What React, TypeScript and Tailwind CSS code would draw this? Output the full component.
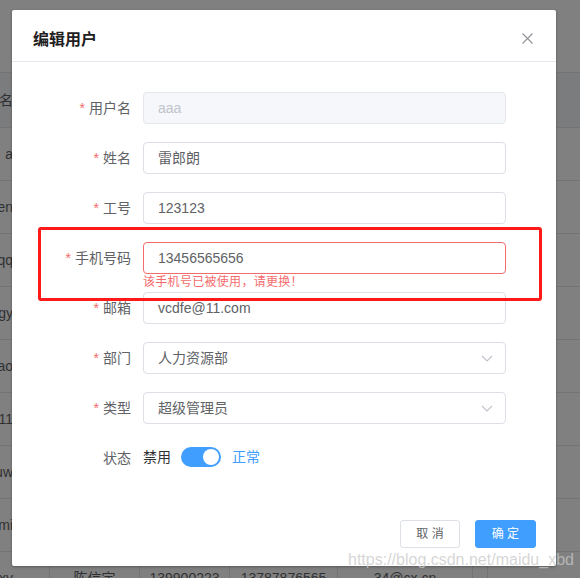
import React from 'react';

const FONT = "font-['Liberation_Sans','Noto_Sans_CJK_SC',sans-serif]";

// background table rows (seen through the modal mask)
const ROWS = [
  { first: '用户名', header: true },
  { first: 'a' },
  { first: 'zhangsen' },
  { first: 'qq' },
  { first: 'wangy' },
  { first: 'xiao' },
  { first: '11' },
  { first: 'liuw' },
  { first: 'admi' },
  { first: 'cxy', rest: ['陈信宇', '139900223', '13787876565', '34@cx.cn'] }
];

function BgTable() {
  return (
    <div className="pt-[72px]">
      {ROWS.map((r, i) => (
        <div
          key={i}
          className={`flex border-t border-[#737476] ${r.header ? 'h-[55px] bg-[#7b7c7d]' : 'h-[53px]'}`}
        >
          <div className="w-[50px] shrink-0 flex items-center justify-end pr-[36px] border-r border-[#737476] whitespace-nowrap text-[14px] text-[#303133]">
            <span>{r.first}</span>
          </div>
          <div className="w-[90px] shrink-0 flex items-center justify-center border-r border-[#737476] text-[14px] text-[#303133]">
            {r.rest?.[0]}
          </div>
          <div className="w-[90px] shrink-0 flex items-center justify-center border-r border-[#737476] text-[14px] text-[#303133]">
            {r.rest?.[1]}
          </div>
          <div className="w-[108px] shrink-0 flex items-center justify-center border-r border-[#737476] text-[14px] text-[#303133]">
            {r.rest?.[2]}
          </div>
          <div className="w-[135px] shrink-0 flex items-center justify-center border-r border-[#737476] text-[14px] text-[#303133]">
            {r.rest?.[3]}
          </div>
          <div className="w-[15px] shrink-0 border-r border-[#737476]" />
        </div>
      ))}
    </div>
  );
}

function Chevron() {
  return (
    <svg width="12" height="7" viewBox="0 0 12 7" fill="none">
      <polyline points="1,1 6,6 11,1" stroke="#c0c4cc" strokeWidth="1.1" />
    </svg>
  );
}

function Label({ text, required = true }: { text: string; required?: boolean }) {
  return (
    <div className="w-[111px] shrink-0 pr-[12px] h-[32px] flex items-center justify-end text-[14px] text-[#606266]">
      {required && <span className="text-[#f56c6c] mr-[4px]">*</span>}
      {text}
    </div>
  );
}

function Field({
  label,
  value,
  disabled = false,
  select = false,
  error
}: {
  label: string;
  value: string;
  disabled?: boolean;
  select?: boolean;
  error?: string;
}) {
  const border = error ? 'border-[#f56c6c]' : disabled ? 'border-[#e4e7ed]' : 'border-[#dcdfe6]';
  return (
    <div className={`flex ${error ? '' : 'mb-[18px]'}`}>
      <Label text={label} />
      <div className="w-[363px]">
        <div
          className={`h-[32px] rounded-[4px] border ${border} ${disabled ? 'bg-[#f5f7fa] text-[#c0c4cc]' : 'bg-white text-[#606266]'} flex items-center pl-[14px] pr-[12px] text-[14px]`}
        >
          <span className="flex-1">{value}</span>
          {select && <Chevron />}
        </div>
        {error && (
          <div className="h-[18px] pt-[2px] text-[12px] leading-[12px] tracking-[0.3px] text-[#f56c6c]">{error}</div>
        )}
      </div>
    </div>
  );
}

export default function App() {
  return (
    <div className={`relative w-[580px] h-[578px] overflow-hidden bg-[#808080] ${FONT}`}>
      <BgTable />

      {/* Dialog */}
      <div className="absolute left-[12px] top-[10px] w-[544px] h-[556px] bg-white rounded-[2px] shadow-[0_1px_3px_rgba(0,0,0,0.3)] flex flex-col">
        <div className="relative pt-[18px] pb-[9px] px-[21px] border-b border-[#e4e7ed]">
          <div className="text-[16px] leading-[24px] font-semibold text-[#1f2021]">编辑用户</div>
          <svg className="absolute right-[23px] top-[23px]" width="11" height="11" viewBox="0 0 11 11">
            <path d="M0.5 0.5L10.5 10.5M10.5 0.5L0.5 10.5" stroke="#909399" strokeWidth="1.1" />
          </svg>
        </div>

        <div className="pt-[30px] pl-[20px]">
          <Field label="用户名" value="aaa" disabled />
          <Field label="姓名" value="雷郎朗" />
          <Field label="工号" value="123123" />
          <Field label="手机号码" value="13456565656" error="该手机号已被使用，请更换！" />
          <Field label="邮箱" value="vcdfe@11.com" />
          <Field label="部门" value="人力资源部" select />
          <Field label="类型" value="超级管理员" select />
          <div className="flex">
            <Label text="状态" required={false} />
            <div className="flex items-center h-[30px] text-[14px]">
              <span className="text-[#303133]">禁用</span>
              <div className="ml-[10px] w-[40px] h-[20px] rounded-full bg-[#409eff] flex items-center justify-end p-[2px]">
                <div className="w-[16px] h-[16px] rounded-full bg-white" />
              </div>
              <span className="ml-[11px] text-[#409eff]">正常</span>
            </div>
          </div>
        </div>

        <div className="mt-[46px] pr-[20px] flex justify-end gap-[15px]">
          <button className="h-[28px] px-[15px] rounded-[3px] border border-[#dcdfe6] bg-white text-[12px] text-[#606266]">
            取 消
          </button>
          <button className="h-[28px] px-[16px] rounded-[3px] border border-[#409eff] bg-[#409eff] text-[12px] text-white">
            确 定
          </button>
        </div>
      </div>

      {/* red annotation box */}
      <div className="absolute left-[38px] top-[227px] w-[504px] h-[74px] border-[3px] border-[#ff1a1a] rounded-[3px]" />

      {/* watermark */}
      <div className="absolute left-[348px] top-[550px] text-[16px] leading-[20px] text-[rgba(200,200,200,0.75)] whitespace-nowrap">
        https://blog.csdn.net/maidu_xbd
      </div>
    </div>
  );
}
